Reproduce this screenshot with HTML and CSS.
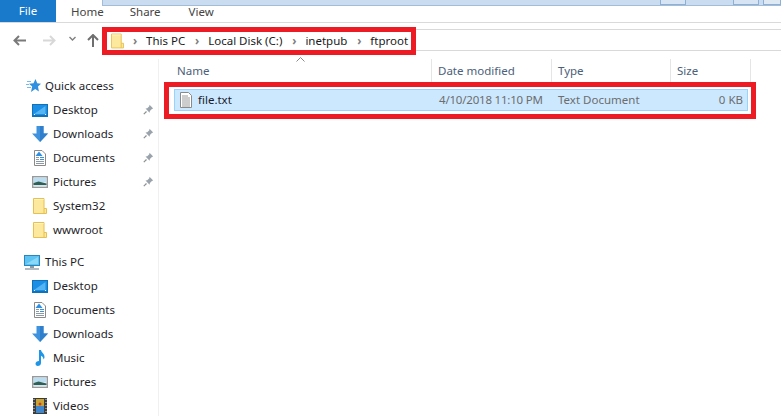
FILE: index.html
```html
<!DOCTYPE html>
<html lang="en">
<head>
<meta charset="utf-8">
<title>ftproot</title>
<link rel="stylesheet" href="styles.css">
</head>
<body>
<svg class="defs" width="0" height="0" aria-hidden="true">
  <defs>
    <symbol id="i-folder" viewBox="0 0 14 16">
      <path d="M.5.500h10.500v10h2.500v5H.5z" fill="#fde99d" stroke="#e8c04f"/>
      <path d="M1 1h9.500v1H1z" fill="#fff4c4"/>
      <path d="M11 10.500v5" stroke="#e8c04f"/>
    </symbol>
    <symbol id="i-desktop" viewBox="0 0 16 13">
      <rect x=".5" y=".5" width="15" height="11" fill="#1b8fe6" stroke="#1272b8"/>
      <path d="M2 10L13.500 2v8z" fill="#55b5f2"/>
      <path d="M0 12.500h16" stroke="#1272b8"/>
      <path d="M2 10.500h1M13 10.500h1" stroke="#e8f5ff"/>
    </symbol>
    <symbol id="i-down" viewBox="0 0 16 16">
      <path d="M4.500 0h7v7.500H16L8 16 0 7.500h4.500z" fill="#3f93de"/>
      <path d="M8 0h3.500v7.500H16L8 16z" fill="#2f7fcc"/>
    </symbol>
    <symbol id="i-doc" viewBox="0 0 12 16">
      <path d="M.5.500h7.500l3.500 3.500v11.500H.5z" fill="#fff" stroke="#8a8a8a"/>
      <path d="M2 7.500h3M2 9.500h3M2 11.500h8M2 13.500h8" stroke="#8a9aa8"/>
      <path d="M5 1.500l3.500 4.500h-7z" fill="#2f8fe0"/>
      <path d="M6 7.500h4M6 9.500h4" stroke="#3b92dc"/>
    </symbol>
    <symbol id="i-pics" viewBox="0 0 16 12">
      <rect x=".75" y=".75" width="14.500" height="10.500" fill="#fff" stroke="#999" stroke-width="1.500"/>
      <rect x="1.500" y="1.500" width="13" height="5" fill="#bcdcf0"/>
      <path d="M1.500 7l5-1.500 8 2v1.500h-13z" fill="#2f5f55"/>
      <rect x="1.500" y="9" width="13" height="1.500" fill="#d5e6ee"/>
    </symbol>
    <symbol id="i-pin" viewBox="0 0 11 11">
      <path d="M6.500.800l3.700 3.700-1.300.4-2 2-.3 1.800L2.500 4.600l1.800-.3 2-2z" fill="#9aa3ab"/>
      <path d="M3.500 7.500L.8 10.200" stroke="#8a8f94" stroke-width="1.200"/>
    </symbol>
  </defs>
</svg>
<div class="window">
  <header class="ribbon">
    <div class="file-tab">File</div>
    <nav class="tabs"><span>Home</span><span>Share</span><span>View</span></nav>
    <div class="title-strip">
      <i class="cap cap-a"></i><i class="cap cap-b"></i><i class="cap cap-c"></i>
    </div>
  </header>
  <div class="navbar">
    <div class="nav-buttons">
      <svg width="13" height="11" viewBox="0 0 13 11"><path d="M6 1L1.500 5.500 6 10M2 5.500h11" fill="none" stroke="#7a7a7a" stroke-width="2"/></svg>
      <svg class="nav-fwd" width="13" height="11" viewBox="0 0 13 11"><path d="M7 1l4.500 4.500L7 10M11 5.500H0" fill="none" stroke="#d8d8d8" stroke-width="2"/></svg>
      <svg class="nav-drop" width="7" height="5" viewBox="0 0 7 5"><path d="M.5 1l3 3 3-3" fill="none" stroke="#808080" stroke-width="1.400"/></svg>
      <svg class="nav-up" width="12" height="13" viewBox="0 0 12 13"><path d="M1 6l5-5 5 5M6 1.500V13" fill="none" stroke="#6f6f6f" stroke-width="2"/></svg>
    </div>
    <div class="address-box">
      <svg class="addr-folder" width="13" height="16"><use href="#i-folder"/></svg>
      <span class="sep">›</span><span class="crumb">This PC</span>
      <span class="sep">›</span><span class="crumb">Local Disk (C:)</span>
      <span class="sep">›</span><span class="crumb">inetpub</span>
      <span class="sep">›</span><span class="crumb">ftproot</span>
    </div>
    <div class="address-rest"></div>
  </div>
  <div class="content">
    <aside class="sidebar">
      <div class="side-row top"><svg class="ic-star" width="15" height="14" viewBox="0 0 15 14"><path d="M9.500 0l1.700 4.300 3.800.4-3 2.900.9 4.900-3.700-2.500L5 13l1.200-5.400L3 4.700l4.500-.4z" fill="#2f8fe0"/><path d="M1 2.500h4M0 5.500h3M1 8.500h4" stroke="#7ab8ea"/></svg><span>Quick access</span></div>
      <div class="side-row"><svg class="ic" width="16" height="13"><use href="#i-desktop"/></svg><span>Desktop</span><svg class="pin" width="11" height="11"><use href="#i-pin"/></svg></div>
      <div class="side-row"><svg class="ic" width="16" height="16"><use href="#i-down"/></svg><span>Downloads</span><svg class="pin" width="11" height="11"><use href="#i-pin"/></svg></div>
      <div class="side-row"><svg class="ic" width="16" height="16"><use href="#i-doc"/></svg><span>Documents</span><svg class="pin" width="11" height="11"><use href="#i-pin"/></svg></div>
      <div class="side-row"><svg class="ic" width="16" height="12"><use href="#i-pics"/></svg><span>Pictures</span><svg class="pin" width="11" height="11"><use href="#i-pin"/></svg></div>
      <div class="side-row"><svg class="ic" width="16" height="16"><use href="#i-folder"/></svg><span>System32</span></div>
      <div class="side-row"><svg class="ic" width="16" height="16"><use href="#i-folder"/></svg><span>wwwroot</span></div>
      <div class="side-row top gap"><svg class="ic-pc" width="16" height="15" viewBox="0 0 16 15"><rect x=".5" y=".5" width="15" height="10" fill="#5cc3f2" stroke="#2c86bd"/><path d="M2 9L14 2v7z" fill="#8ad8f8"/><path d="M6 11h4v2H6z" fill="#8c9aa6"/><path d="M1 14h14" stroke="#9aa5ae" stroke-width="1.500"/></svg><span>This PC</span></div>
      <div class="side-row"><svg class="ic" width="16" height="13"><use href="#i-desktop"/></svg><span>Desktop</span></div>
      <div class="side-row"><svg class="ic" width="16" height="16"><use href="#i-doc"/></svg><span>Documents</span></div>
      <div class="side-row"><svg class="ic" width="16" height="16"><use href="#i-down"/></svg><span>Downloads</span></div>
      <div class="side-row"><svg class="ic" width="16" height="16" viewBox="0 0 16 16"><path d="M7 0h2c.5 3 3.500 3.500 3.500 7 0 1-.5 2-1 2.500.2-2-1.500-3.500-2.500-3.800V13c0 1.800-1.500 3-3.200 3C4.300 16 3.500 15 3.500 13.800 3.500 12.300 5 11 7 11z" fill="#1e96e8"/></svg><span>Music</span></div>
      <div class="side-row"><svg class="ic" width="16" height="12"><use href="#i-pics"/></svg><span>Pictures</span></div>
      <div class="side-row"><svg class="ic" width="16" height="16" viewBox="0 0 14 16"><rect width="14" height="16" fill="#3c3c3c"/><path d="M1 1v1M1 4v1M1 7v1M1 10v1M1 13v1M13 1v1M13 4v1M13 7v1M13 10v1M13 13v1" stroke="#ddd"/><rect x="3" y="1" width="8" height="7" fill="#c9a535"/><rect x="3" y="8" width="8" height="7" fill="#3f86cc"/><circle cx="7" cy="6" r="1.500" fill="#c8402c"/></svg><span>Videos</span></div>
    </aside>
    <main class="files">
      <div class="sort-caret"><svg width="9" height="5" viewBox="0 0 9 5"><path d="M.5 4.500l4-4 4 4" fill="none" stroke="#8a8a8a"/></svg></div>
      <div class="col-head">
        <span class="col c-name">Name</span>
        <span class="col c-date">Date modified</span>
        <span class="col c-type">Type</span>
        <span class="col c-size">Size</span>
      </div>
      <div class="file-box">
        <div class="file-row">
          <span class="cell c-name name-cell"><svg width="12" height="16" viewBox="0 0 12 16"><path d="M.5.500h8l3 3v12H.5z" fill="#fff" stroke="#8a8a8a"/><path d="M2 4h6M2 6h8M2 8h8M2 10h8M2 12h8M2 14h8" stroke="#9a9a9a"/></svg>file.txt</span>
          <span class="cell c-date">4/10/2018 11:10 PM</span>
          <span class="cell c-type">Text Document</span>
          <span class="cell c-size">0 KB</span>
        </div>
      </div>
    </main>
  </div>
</div>
</body>
</html>
```

FILE: styles.css
```css
* { box-sizing: border-box; }
html, body { margin: 0; padding: 0; background: #fff; }
.defs { position: absolute; }
.window {
  width: 781px;
  height: 416px;
  overflow: hidden;
  display: flex;
  flex-direction: column;
  font: 11.5px/16px "Noto Sans", "Open Sans", sans-serif;
  color: #1e1e2a;
  background: #fff;
}
.ribbon {
  height: 23px;
  flex: none;
  display: flex;
  align-items: flex-start;
  border-bottom: 1px solid #dadada;
}
.file-tab {
  width: 56px;
  height: 22px;
  background: #1979ca;
  color: #fff;
  text-align: center;
  line-height: 22px;
}
.tabs {
  width: 46px;
  flex: none;
  display: flex;
  color: #444;
  line-height: 23px;
}
.tabs span { flex: none; }
.tabs span:nth-child(1) { margin-left: 15px; }
.tabs span:nth-child(2) { margin-left: 26px; }
.tabs span:nth-child(3) { margin-left: 28px; }
.title-strip {
  flex: 1;
  height: 6px;
  background: #c9dcf0;
  border-bottom: 1px solid #a3bdd8;
  border-left: 1px solid #a3bdd8;
  display: flex;
}
.cap { display: block; height: 5px; background: #d6e4f3; border: 1px solid #8fb0d4; border-top: 0; }
.cap-a { width: 26px; margin-left: 557px; }
.cap-b { width: 26px; margin-left: 47px; }
.cap-c { flex: 1; margin-left: 4px; background: #dfe9f4; }
.navbar {
  height: 36px;
  flex: none;
  display: flex;
  align-items: flex-start;
  padding-top: 4px;
}
.nav-buttons {
  width: 102px;
  height: 26px;
  flex: none;
  display: flex;
  align-items: center;
  padding-left: 13px;
}
.nav-fwd { margin-left: 17px; }
.nav-drop { margin-left: 13px; margin-bottom: 3px; }
.nav-up { margin-left: 11px; }
.address-box {
  width: 314px;
  height: 28px;
  flex: none;
  border: 5px solid #ed1c24;
  display: flex;
  align-items: center;
  padding-left: 4px;
  color: #1a1a1a;
}
.address-rest {
  flex: 1;
  height: 22px;
  margin-top: 2px;
  border-top: 1px solid #d9d9d9;
  border-bottom: 1px solid #d9d9d9;
}
.addr-folder { flex: none; }
.sep { width: 22px; text-align: center; color: #808080; font-weight: 700; flex: none; }
.crumb { flex: none; padding-right: 1px; }
.content { flex: 1; display: flex; min-height: 0; }
.sidebar {
  width: 159px;
  flex: none;
  border-right: 1px solid #f0f0f0;
  padding-top: 15px;
}
.side-row {
  height: 24px;
  display: flex;
  align-items: center;
  position: relative;
  padding-left: 32px;
}
.side-row span { position: relative; }
.side-row .ic { flex: none; width: 16px; margin-right: 5px; }
.side-row.top { padding-left: 26px; }
.side-row.gap { margin-top: 8px; }
.ic-star { margin-right: 4px; }
.ic-pc { margin-right: 5px; margin-left: -2px; }
.pin { position: absolute; left: 143px; top: 6px; }
.files { flex: 1; position: relative; }
.sort-caret { position: absolute; left: 137px; top: -2px; line-height: 0; }
.col-head {
  height: 23px;
  display: flex;
  color: #4c607a;
}
.col {
  display: block;
  border-right: 1px solid #e5e5e5;
  padding-left: 18px;
  line-height: 23px;
  flex: none;
}
.c-name { width: 273px; }
.c-date { width: 120px; padding-left: 6px; }
.c-type { width: 119px; padding-left: 6px; }
.c-size { width: 80px; padding-left: 6px; }
.file-box {
  margin-left: 5px;
  width: 592px;
  height: 37px;
  border: 5px solid #ed1c24;
  padding: 2px 3px 3px 5px;
}
.file-row {
  height: 22px;
  background: #cce8ff;
  border: 1px solid #99d1ff;
  display: flex;
  align-items: center;
  color: #6d6d6d;
}
.cell { flex: none; display: block; }
.name-cell {
  width: 258px;
  color: #1a1a2a;
  display: flex;
  align-items: center;
  gap: 6px;
  padding-left: 5px;
}
.file-row .c-date { width: 119px; padding-left: 6px; letter-spacing: -.2px; }
.file-row .c-type { width: 119px; padding-left: 6px; }
.file-row .c-size { width: 72px; padding: 0; text-align: right; }
```
